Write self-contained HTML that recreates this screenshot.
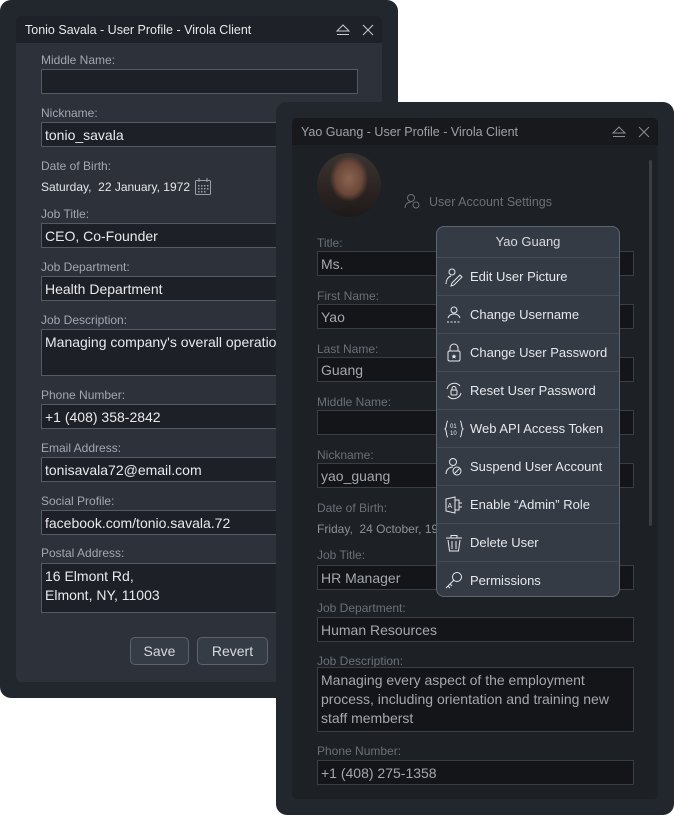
<!DOCTYPE html><html><head><style>
*{margin:0;padding:0;box-sizing:border-box}
body{width:674px;height:815px;background:#fff;position:relative;overflow:hidden;font-family:"Liberation Sans",sans-serif}
.abs{position:absolute}
.outer{position:absolute;background:#22262d;border-radius:11px}
.win{position:absolute;border-radius:5px;overflow:hidden}
.tb{position:absolute;left:0;right:0;top:0;font-size:12.5px;padding-left:9px}
.lbl{position:absolute;font-size:12px}
.fld{position:absolute;font-size:14px;padding:3px 3px;line-height:19px;white-space:nowrap;overflow:hidden}
.L .lbl{color:#a3a8b0}.L .fld{background:#1d2026;border:1px solid #555b64;color:#e8eaed;left:25px;width:317px;height:25px}
.R .lbl{color:#6b7078}.R .fld{background:#131518;border:1px solid #3a3e45;color:#a4a8ae;left:25px;width:317px;height:25px}
.menu{position:absolute;left:436px;top:226px;width:184px;height:371px;background:#353b45;border:1px solid #5f6570;border-radius:8px;overflow:hidden;color:#e6e8eb;font-size:13px}
.mi{height:38px;border-top:1px solid #464c56;display:flex;align-items:center;padding-left:33px;position:relative}
.mi svg{position:absolute;left:7px;top:9px}
.btn{position:absolute;top:637px;height:28px;border:1px solid #5c636d;border-radius:5px;background:#363c46;color:#d7dade;font-size:14px;text-align:center;line-height:26px}
</style></head><body>
<div class="outer" style="left:0;top:0;width:398px;height:698px"></div>
<div class="win L" style="left:16px;top:16px;width:366px;height:666px;background:#2c313a">
<div class="tb" style="height:27px;background:#1e2127;color:#e8e9eb;line-height:29px">Tonio Savala - User Profile - Virola Client</div>
<svg class="abs" style="left:320px;top:8px" width="14" height="12"><path d="M1 7L7 1L13 7Z M1 10.5H13" stroke="#c8cbd0" fill="none"/></svg>
<svg class="abs" style="left:346px;top:8px" width="12" height="12"><path d="M1 1L11 11M11 1L1 11" stroke="#c8cbd0"/></svg>
<div class="lbl" style="left:25px;top:37px">Middle Name:</div><div class="fld" style="top:53px"></div>
<div class="lbl" style="left:25px;top:90px">Nickname:</div><div class="fld" style="top:106px">tonio_savala</div>
<div class="lbl" style="left:25px;top:143px">Date of Birth:</div>
<div class="abs" style="left:25px;top:164px;font-size:12px;color:#e4e6e9">Saturday,&nbsp; 22 January, 1972</div>
<svg class="abs" style="left:179px;top:162px" width="16" height="17"><rect x="0.5" y="2.5" width="15" height="14" rx="1" stroke="#9aa0a8" fill="none"/><path d="M4 0v4M12 0v4" stroke="#9aa0a8"/><g fill="#9aa0a8"><rect x="3" y="7" width="1.5" height="1.5"/><rect x="6" y="7" width="1.5" height="1.5"/><rect x="9" y="7" width="1.5" height="1.5"/><rect x="12" y="7" width="1.5" height="1.5"/><rect x="3" y="10" width="1.5" height="1.5"/><rect x="6" y="10" width="1.5" height="1.5"/><rect x="9" y="10" width="1.5" height="1.5"/><rect x="12" y="10" width="1.5" height="1.5"/><rect x="3" y="13" width="1.5" height="1.5"/><rect x="6" y="13" width="1.5" height="1.5"/><rect x="9" y="13" width="1.5" height="1.5"/></g></svg>
<div class="lbl" style="left:25px;top:191px">Job Title:</div><div class="fld" style="top:207px">CEO, Co-Founder</div>
<div class="lbl" style="left:25px;top:244px">Job Department:</div><div class="fld" style="top:260px">Health Department</div>
<div class="lbl" style="left:25px;top:297px">Job Description:</div><div class="fld" style="top:313px;height:47px">Managing company's overall operations</div>
<div class="lbl" style="left:25px;top:372px">Phone Number:</div><div class="fld" style="top:388px">+1 (408) 358-2842</div>
<div class="lbl" style="left:25px;top:425px">Email Address:</div><div class="fld" style="top:441px">tonisavala72@email.com</div>
<div class="lbl" style="left:25px;top:478px">Social Profile:</div><div class="fld" style="top:494px">facebook.com/tonio.savala.72</div>
<div class="lbl" style="left:25px;top:530px">Postal Address:</div><div class="fld" style="top:547px;height:50px">16 Elmont Rd,<br>Elmont, NY, 11003</div>
</div>
<div class="btn" style="left:130px;width:59px">Save</div>
<div class="btn" style="left:197px;width:71px">Revert</div>

<div class="outer" style="left:276px;top:102px;width:398px;height:713px"></div>
<div class="win R" style="left:292px;top:118px;width:366px;height:681px;background:#1d2025">
<div class="tb" style="height:27px;background:#17191d;color:#9ea2a8;line-height:29px">Yao Guang - User Profile - Virola Client</div>
<svg class="abs" style="left:320px;top:8px" width="14" height="12"><path d="M1 7L7 1L13 7Z M1 10.5H13" stroke="#8a8e94" fill="none"/></svg>
<svg class="abs" style="left:346px;top:8px" width="12" height="12"><path d="M1 1L11 11M11 1L1 11" stroke="#8a8e94"/></svg>
<div class="abs" style="left:357px;top:42px;width:3px;height:366px;background:#3a3e45;border-radius:2px"></div>
<div class="abs" style="left:25px;top:35px;width:64px;height:64px;border-radius:50%;background:radial-gradient(ellipse 30% 36% at 50% 40%,#8a6452 0,#6a4738 70%,transparent 100%),linear-gradient(#3a3430 0,#2b2321 60%,#1e1a1a 100%)"></div>
<svg class="abs" style="left:112px;top:75px" width="18" height="17"><circle cx="7" cy="5" r="3.5" stroke="#6b7078" fill="none"/><path d="M1 15c0-4 3-6 6-6M9 12a3 3 0 1 0 6 0a3 3 0 1 0-6 0" stroke="#6b7078" fill="none"/></svg>
<div class="abs" style="left:137px;top:77px;font-size:12.5px;color:#6b7078">User Account Settings</div>
<div class="lbl" style="left:25px;top:118px">Title:</div><div class="fld" style="top:133px">Ms.</div>
<div class="lbl" style="left:25px;top:171px">First Name:</div><div class="fld" style="top:186px">Yao</div>
<div class="lbl" style="left:25px;top:224px">Last Name:</div><div class="fld" style="top:239px">Guang</div>
<div class="lbl" style="left:25px;top:277px">Middle Name:</div><div class="fld" style="top:292px"></div>
<div class="lbl" style="left:25px;top:330px">Nickname:</div><div class="fld" style="top:345px">yao_guang</div>
<div class="lbl" style="left:25px;top:383px">Date of Birth:</div>
<div class="abs" style="left:25px;top:404px;font-size:12px;color:#8e9298">Friday,&nbsp; 24 October, 1990</div>
<div class="lbl" style="left:25px;top:430px">Job Title:</div><div class="fld" style="top:447px">HR Manager</div>
<div class="lbl" style="left:25px;top:483px">Job Department:</div><div class="fld" style="top:499px">Human Resources</div>
<div class="lbl" style="left:25px;top:536px">Job Description:</div><div class="fld" style="top:549px;height:65px;white-space:normal">Managing every aspect of the employment process, including orientation and training new staff memberst</div>
<div class="lbl" style="left:25px;top:626px">Phone Number:</div><div class="fld" style="top:642px">+1 (408) 275-1358</div>
</div>

<div class="menu">
<div style="height:30px;text-align:center;line-height:30px;color:#d8dbdf">Yao Guang</div>
<div class="mi"><svg width="20" height="20" fill="none" stroke="#e6e8eb"><circle cx="8" cy="5" r="3"/><path d="M2 17c0-4 2-7 5-8M8 16l8-8 2 2-8 8-3 1z"/></svg>Edit User Picture</div>
<div class="mi"><svg width="20" height="20" fill="none" stroke="#e6e8eb"><circle cx="10" cy="5" r="3"/><path d="M4 13c1-3 3-4 6-4s5 1 6 4"/><path d="M3 17h14" stroke-dasharray="2 1.5"/></svg>Change Username</div>
<div class="mi"><svg width="20" height="20" fill="none" stroke="#e6e8eb"><path d="M6 8V5a4 4 0 0 1 8 0v3"/><rect x="4" y="8" width="12" height="10" rx="1.5"/><path d="M10 11l.8 1.6 1.7.2-1.3 1.1.4 1.7-1.6-.9-1.6.9.4-1.7-1.3-1.1 1.7-.2z" fill="#e6e8eb" stroke="none"/></svg>Change User Password</div>
<div class="mi"><svg width="20" height="20" fill="none" stroke="#e6e8eb"><path d="M3 8a7.5 7.5 0 0 1 13-3M17 12a7.5 7.5 0 0 1-13 3"/><path d="M8 9V7.5a2 2 0 0 1 4 0V9"/><rect x="7" y="9" width="6" height="5" rx="1"/></svg>Reset User Password</div>
<div class="mi"><svg width="20" height="20" fill="none" stroke="#e6e8eb"><path d="M4 2C2 2 3 9 1 10c2 1 1 8 3 8M16 2c2 0 1 7 3 8-2 1-1 8-3 8"/><text x="6" y="9" font-size="6" fill="#e6e8eb" stroke="none" font-family="Liberation Sans">01</text><text x="6" y="16" font-size="6" fill="#e6e8eb" stroke="none" font-family="Liberation Sans">10</text></svg>Web API Access Token</div>
<div class="mi"><svg width="20" height="20" fill="none" stroke="#e6e8eb"><circle cx="9" cy="5" r="3.5"/><path d="M2 17c0-4 3-7 7-7"/><circle cx="13" cy="14" r="4"/><path d="M10.5 16.5l5-5"/></svg>Suspend User Account</div>
<div class="mi"><svg width="20" height="20" fill="none" stroke="#e6e8eb"><path d="M2 4l9-2v16l-9-2z"/><path d="M11 5h4v10h-4M15 8h3M15 12h3"/><text x="3.5" y="13" font-size="7" fill="#e6e8eb" stroke="none" font-family="Liberation Sans">A</text></svg>Enable “Admin” Role</div>
<div class="mi"><svg width="20" height="20" fill="none" stroke="#e6e8eb"><path d="M2 5h16M7 5V2.5h6V5M4 7l1.5 11h9L16 7M8 8v8M12 8v8"/></svg>Delete User</div>
<div class="mi"><svg width="20" height="20" fill="none" stroke="#e6e8eb"><circle cx="13" cy="6" r="4.5"/><path d="M10 9l-8 8M4 15l2 2M6 13l2 2"/></svg>Permissions</div>
</div>
</body></html>
